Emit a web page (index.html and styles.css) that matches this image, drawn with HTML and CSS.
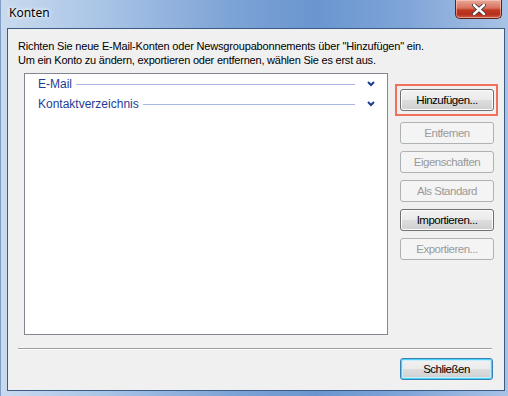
FILE: index.html
```html
<!DOCTYPE html>
<html lang="de">
  <head>
    <meta charset="UTF-8" />
    <meta name="viewport" content="width=device-width, initial-scale=1.0" />
    <title>Konten</title>
    <link rel="stylesheet" href="styles.css">
  </head>
  <body>
    <div class="window">
      <div class="titlebar">
        <span class="title">Konten</span>
        <button class="close">
          <svg width="14" height="11" viewBox="0 0 14 11">
            <path d="M2 1 L12 10 M12 1 L2 10" stroke="#3a3a3a" stroke-width="4.2" stroke-linecap="round" />
            <path d="M2 1 L12 10 M12 1 L2 10" stroke="#fff" stroke-width="2.4" stroke-linecap="round" />
          </svg>
        </button>
      </div>

      <div class="client">
        <p class="intro">
          <span class="line1">Richten Sie neue E-Mail-Konten oder Newsgroupabonnements über "Hinzufügen" ein.</span><br />
          <span class="line2">Um ein Konto zu ändern, exportieren oder entfernen, wählen Sie es erst aus.</span>
        </p>

        <div class="main">
          <ul class="accounts">
            <li class="group">
              <span class="group-name">E-Mail</span>
              <span class="group-line"></span>
              <svg class="chev" width="8" height="6" viewBox="0 0 8 6"><path d="M1 1 L4 4 L7 1" fill="none" stroke="#1b3d8f" stroke-width="2" /></svg>
            </li>
            <li class="group">
              <span class="group-name">Kontaktverzeichnis</span>
              <span class="group-line"></span>
              <svg class="chev" width="8" height="6" viewBox="0 0 8 6"><path d="M1 1 L4 4 L7 1" fill="none" stroke="#1b3d8f" stroke-width="2" /></svg>
            </li>
          </ul>

          <div class="actions">
            <div class="highlight">
              <button class="btn">Hinzufügen...</button>
            </div>
            <button class="btn" disabled>Entfernen</button>
            <button class="btn" disabled>Eigenschaften</button>
            <button class="btn" disabled>Als Standard</button>
            <button class="btn">Importieren...</button>
            <button class="btn" disabled>Exportieren...</button>
          </div>
        </div>

        <div class="separator"></div>

        <div class="footer">
          <button class="btn default">Schließen</button>
        </div>
      </div>
    </div>
  </body>
</html>
```

FILE: styles.css
```css
* {
  box-sizing: border-box;
}
body {
  margin: 0;
  width: 508px;
  height: 396px;
  overflow: hidden;
  font-family: "Liberation Sans", Arial, sans-serif;
  font-size: 11px;
}
.window {
  width: 508px;
  height: 396px;
  padding: 0 3px 5px 6px;
  display: flex;
  flex-direction: column;
  background: linear-gradient(90deg, #c9daee 0%, #a9c4e6 20%, #7ea4d6 45%, #6a95cf 62%, #7fa5d8 80%, #a8c2e4 100%);
  border-left: 1px solid #7d9cc6;
}

/* Titelleiste */
.titlebar {
  height: 28px;
  display: flex;
  align-items: flex-start;
  justify-content: space-between;
  flex-shrink: 0;
}
.title {
  font-family: "Noto Sans", "Open Sans", sans-serif;
  font-size: 12px;
  padding-top: 4px;
  padding-left: 2px;
  color: #000;
  text-shadow: 0 0 6px #fff, 0 0 3px #fff;
}
.close {
  width: 47px;
  height: 19px;
  margin-right: 3px;
  padding: 0;
  display: flex;
  align-items: center;
  justify-content: center;
  border: 1px solid #5b2419;
  border-top: none;
  border-radius: 0 0 5px 5px;
  background: linear-gradient(#e9a89a 0%, #d8725f 45%, #c13b22 55%, #b5301b 80%, #d0604a 100%);
  box-shadow: inset 0 0 0 1px rgba(255, 220, 210, 0.5);
}

/* Fensterinhalt */
.client {
  flex: 1;
  background: #f0f0f0;
  border: 1px solid #3b5c84;
  padding: 10px 10px 0 10px;
  display: flex;
  flex-direction: column;
}
.intro {
  margin: 0;
  line-height: 14px;
  color: #000;
}
.line1 {
  letter-spacing: -0.17px;
}
.line2 {
  letter-spacing: -0.22px;
}
.main {
  display: flex;
  margin-top: 6px;
  height: 262px;
}
.accounts {
  list-style: none;
  margin: 0 0 0 6px;
  padding: 0 0 0 13px;
  width: 364px;
  height: 262px;
  background: #fff;
  border: 1px solid #828790;
}
.group {
  display: flex;
  align-items: center;
  height: 20px;
  padding-right: 12px;
}
.group-name {
  color: #1e3c96;
  font-size: 12px;
}
.group-line {
  flex: 1;
  height: 1px;
  margin: 0 3px 0 4px;
  background: #a7b9e1;
}
.chev {
  margin-left: 9px;
}

/* Schaltflächen rechts */
.actions {
  margin-left: 12px;
  margin-top: 16px;
  display: flex;
  flex-direction: column;
  gap: 7px;
}
.highlight {
  margin: -5px -4px -1px -5px;
  padding: 3px 2px 3px 3px;
  border: 2px solid #f0705c;
}
.btn {
  width: 94px;
  height: 22px;
  padding: 0;
  font-family: "Liberation Sans", Arial, sans-serif;
  font-size: 11.5px;
  letter-spacing: -0.5px;
  color: #000;
  border: 1px solid #707070;
  border-radius: 3px;
  background: linear-gradient(#f2f2f2 0%, #ebebeb 48%, #dddddd 52%, #cfcfcf 100%);
  box-shadow: inset 0 0 0 1px #fcfcfc;
}
.btn:disabled {
  color: #9a9a9a;
  border-color: #adb2b5;
  background: #f4f4f4;
  box-shadow: none;
}

.separator {
  margin-top: 13px;
  height: 2px;
  background: #a0a0a0;
  border-bottom: 1px solid #fff;
  margin-right: 2px;
}
.footer {
  display: flex;
  justify-content: flex-end;
  padding: 8px 1px 0 0;
}
.btn.default {
  width: 93px;
  border-color: #3c7fb1;
  box-shadow: inset 0 0 0 1px #48d2f8, inset 0 0 0 2px #c6eefc;
}
```
